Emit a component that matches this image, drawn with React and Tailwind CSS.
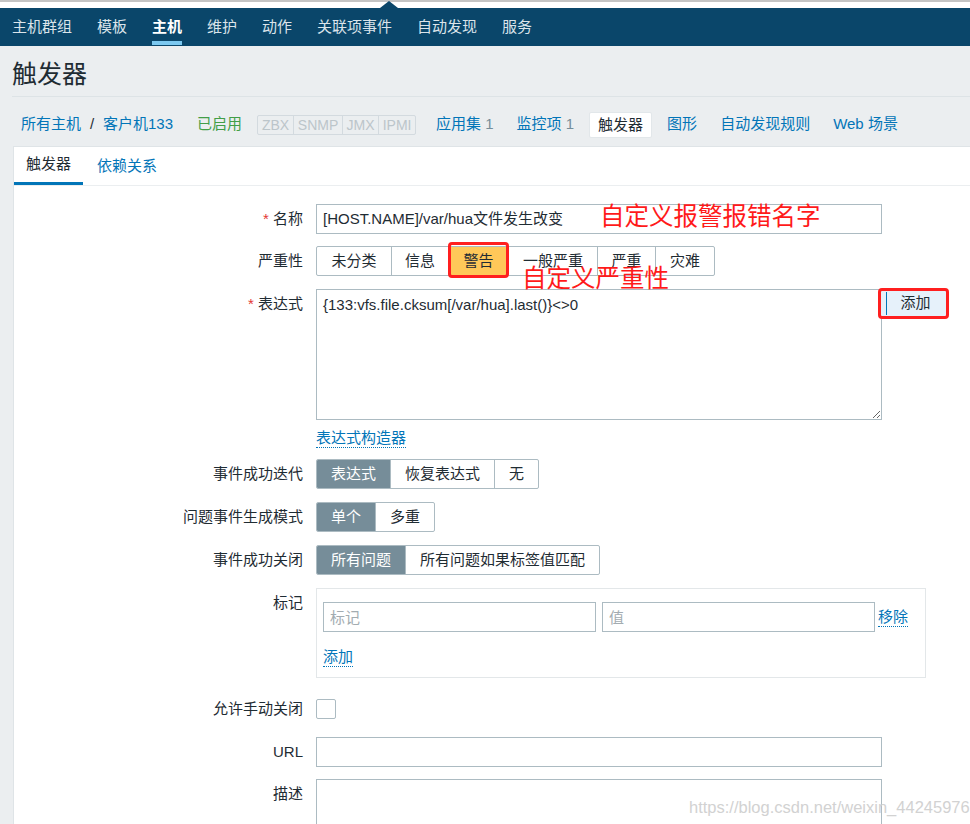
import React from 'react';

const navItems = ['主机群组', '模板', '主机', '维护', '动作', '关联项事件', '自动发现', '服务'];

const Label = ({ children, required }) => (
  <div className="w-[289px] shrink-0 text-right leading-[30px]">
    {required && <span className="text-[#e33734]">* </span>}
    {children}
  </div>
);

const Row = ({ label, required, className = '', children }) => (
  <div className={`flex ${className}`}>
    <Label required={required}>{label}</Label>
    <div className="ml-[13px] flex items-start">{children}</div>
  </div>
);

const Segmented = ({ items, active }) => (
  <div className="flex h-[30px] border border-[#acbbc2] rounded-[2px] overflow-hidden">
    {items.map((it, i) => (
      <div
        key={it}
        className={`px-[14px] leading-[28px] ${i > 0 ? 'border-l border-[#acbbc2]' : ''} ${
          i === active ? 'bg-[#768d99] text-white' : ''
        }`}
      >
        {it}
      </div>
    ))}
  </div>
);

const DottedLink = ({ children }) => (
  <span className="inline-block leading-[18px] text-[#0275b8] border-b border-dotted border-[#0275b8]">{children}</span>
);

export default function App() {
  return (
    <div className="relative w-[970px] h-[824px] overflow-hidden bg-[#ebeef0] text-[15px] text-[#1f2c33] font-['Liberation_Sans','Noto_Sans_CJK_SC',sans-serif]">
      {/* top strip */}
      <div className="relative h-[8px] bg-white border-t-2 border-[#c4c4c4]">
        <div className="absolute left-[380px] top-[-1px] w-0 h-0 border-x-[9px] border-x-transparent border-b-[7px] border-b-[#0a466a]" />
      </div>

      {/* main nav */}
      <nav className="h-[38px] bg-[#0a466a] flex pl-[12px] gap-[25px]">
        {navItems.map((item) => (
          <div
            key={item}
            className={`h-[37px] pt-[5px] flex items-center border-b-[4px] ${
              item === '主机' ? 'border-[#7bc8f0] text-white font-bold' : 'border-transparent text-[#dbe4ea]'
            }`}
          >
            {item}
          </div>
        ))}
      </nav>

      {/* title */}
      <div className="ml-[12px] h-[51px] pt-[6px] flex items-center border-b border-[#dde3e6]">
        <h1 className="text-[25px] leading-none">触发器</h1>
      </div>

      {/* breadcrumbs */}
      <div className="h-[49px] pt-[6px] pl-[13px] flex items-center">
        <span className="px-[8px] text-[#0275b8]">所有主机</span>
        <span className="w-[6px] text-center">/</span>
        <span className="px-[8px] text-[#0275b8]">客户机133</span>
        <span className="ml-[8px] px-[8px] text-[#429e47]">已启用</span>
        <div className="ml-[7px] flex h-[20px] border border-[#d3dadf] rounded-[2px] text-[14px] leading-[18px] text-[#bcc5ca]">
          <span className="w-[35px] text-center">ZBX</span>
          <span className="w-[49px] text-center border-l border-[#d3dadf]">SNMP</span>
          <span className="w-[36px] text-center border-l border-[#d3dadf]">JMX</span>
          <span className="w-[37px] text-center border-l border-[#d3dadf]">IPMI</span>
        </div>
        <span className="ml-[12px] px-[8px] text-[#0275b8]">
          应用集 <span className="text-[#768d99]">1</span>
        </span>
        <span className="ml-[7px] px-[8px] text-[#0275b8]">
          监控项 <span className="text-[#768d99]">1</span>
        </span>
        <span className="ml-[7px] px-[8px] h-[26px] leading-[24px] bg-white border border-[#e2e7ea] rounded-[2px]">触发器</span>
        <span className="ml-[7px] px-[8px] text-[#0275b8]">图形</span>
        <span className="ml-[7px] px-[8px] text-[#0275b8]">自动发现规则</span>
        <span className="ml-[7px] px-[8px] text-[#0275b8]">Web 场景</span>
      </div>

      {/* form panel */}
      <div className="ml-[13px] w-[1000px] h-[700px] bg-white border border-[#dfe4e7]">
        <div className="flex h-[39px] border-b border-[#ebeef0]">
          <div className="h-[38px] px-[12px] flex items-center border-b-[3px] border-[#0275b8]">触发器</div>
          <div className="h-[38px] ml-[2px] px-[12px] flex items-center text-[#0275b8]">依赖关系</div>
        </div>

        <div className="relative pt-[18px]">
          <Row label="名称" required>
            <div className="w-[566px] h-[30px] px-[6px] leading-[28px] border border-[#acbbc2]">
              [HOST.NAME]/var/hua文件发生改变
            </div>
          </Row>

          <Row label="严重性" className="mt-[12px]">
            <div className="flex h-[30px] border border-[#acbbc2] rounded-[2px]">
              <div className="w-[74px] text-center leading-[28px]">未分类</div>
              <div className="w-[57px] text-center leading-[28px] border-l border-[#acbbc2]">信息</div>
              <div className="relative w-[60px] text-center leading-[28px] border-l border-[#acbbc2] bg-[#ffc859]">
                警告
                <div className="absolute left-[-1px] top-[-5px] w-[61px] h-[36px] border-[3px] border-[#ff1f1f] rounded-[4px]" />
              </div>
              <div className="w-[89px] text-center leading-[28px] border-l border-[#acbbc2]">一般严重</div>
              <div className="w-[58px] text-center leading-[28px] border-l border-[#acbbc2]">严重</div>
              <div className="w-[59px] text-center leading-[28px] border-l border-[#acbbc2]">灾难</div>
            </div>
          </Row>

          <Row label="表达式" required className="mt-[13px]">
            <textarea
              readOnly
              className="w-[566px] h-[131px] px-[6px] pt-[6px] leading-[18px] border border-[#acbbc2] outline-none"
              defaultValue="{133:vfs.file.cksum[/var/hua].last()}<>0"
            />
            <div className="relative z-10 ml-[-4px] mt-[-1px] w-[71px] h-[31px] border-[3px] border-[#ff1f1f] rounded-[4px] bg-[#e6f1fa] flex items-center">
              <div className="ml-[5px] w-[1px] h-[23px] bg-[#0275b8]" />
              <div className="flex-1 text-center pr-[2px]">添加</div>
            </div>
          </Row>

          <Row label="" className="mt-[9px]">
            <DottedLink>表达式构造器</DottedLink>
          </Row>

          <Row label="事件成功迭代" className="mt-[11px]">
            <Segmented items={['表达式', '恢复表达式', '无']} active={0} />
          </Row>

          <Row label="问题事件生成模式" className="mt-[13px]">
            <Segmented items={['单个', '多重']} active={0} />
          </Row>

          <Row label="事件成功关闭" className="mt-[13px]">
            <Segmented items={['所有问题', '所有问题如果标签值匹配']} active={0} />
          </Row>

          <Row label="标记" className="mt-[13px]">
            <div className="w-[610px] h-[90px] border border-[#e3e7e9] pt-[13px] pl-[6px]">
              <div className="flex items-center">
                <input
                  readOnly
                  placeholder="标记"
                  className="w-[273px] h-[30px] px-[6px] border border-[#acbbc2] outline-none placeholder:text-[#a3acb1]"
                />
                <input
                  readOnly
                  placeholder="值"
                  className="ml-[6px] w-[273px] h-[30px] px-[6px] border border-[#acbbc2] outline-none placeholder:text-[#a3acb1]"
                />
                <span className="ml-[3px]">
                  <DottedLink>移除</DottedLink>
                </span>
              </div>
              <div className="mt-[14px]">
                <DottedLink>添加</DottedLink>
              </div>
            </div>
          </Row>

          <Row label="允许手动关闭" className="mt-[16px]">
            <div className="h-[30px] flex items-center">
              <div className="w-[20px] h-[20px] border border-[#acbbc2] rounded-[2px]" />
            </div>
          </Row>

          <Row label="URL" className="mt-[13px]">
            <div className="w-[566px] h-[30px] border border-[#acbbc2]" />
          </Row>

          <Row label="描述" className="mt-[12px]">
            <div className="w-[566px] h-[100px] border border-[#acbbc2]" />
          </Row>

          {/* annotations */}
          <div className="absolute left-[586px] top-[19px] text-[24.5px] leading-none text-[#ff1a1a] whitespace-nowrap">
            自定义报警报错名字
          </div>
          <div className="absolute left-[508px] top-[81px] text-[24.5px] leading-none text-[#ff1a1a] whitespace-nowrap">
            自定义严重性
          </div>
        </div>
      </div>

      {/* watermark */}
      <div className="absolute left-[689px] top-[795px] text-[16.5px] text-[#d2d2d2] whitespace-nowrap">
        https://blog.csdn.net/weixin_44245976
      </div>
    </div>
  );
}
